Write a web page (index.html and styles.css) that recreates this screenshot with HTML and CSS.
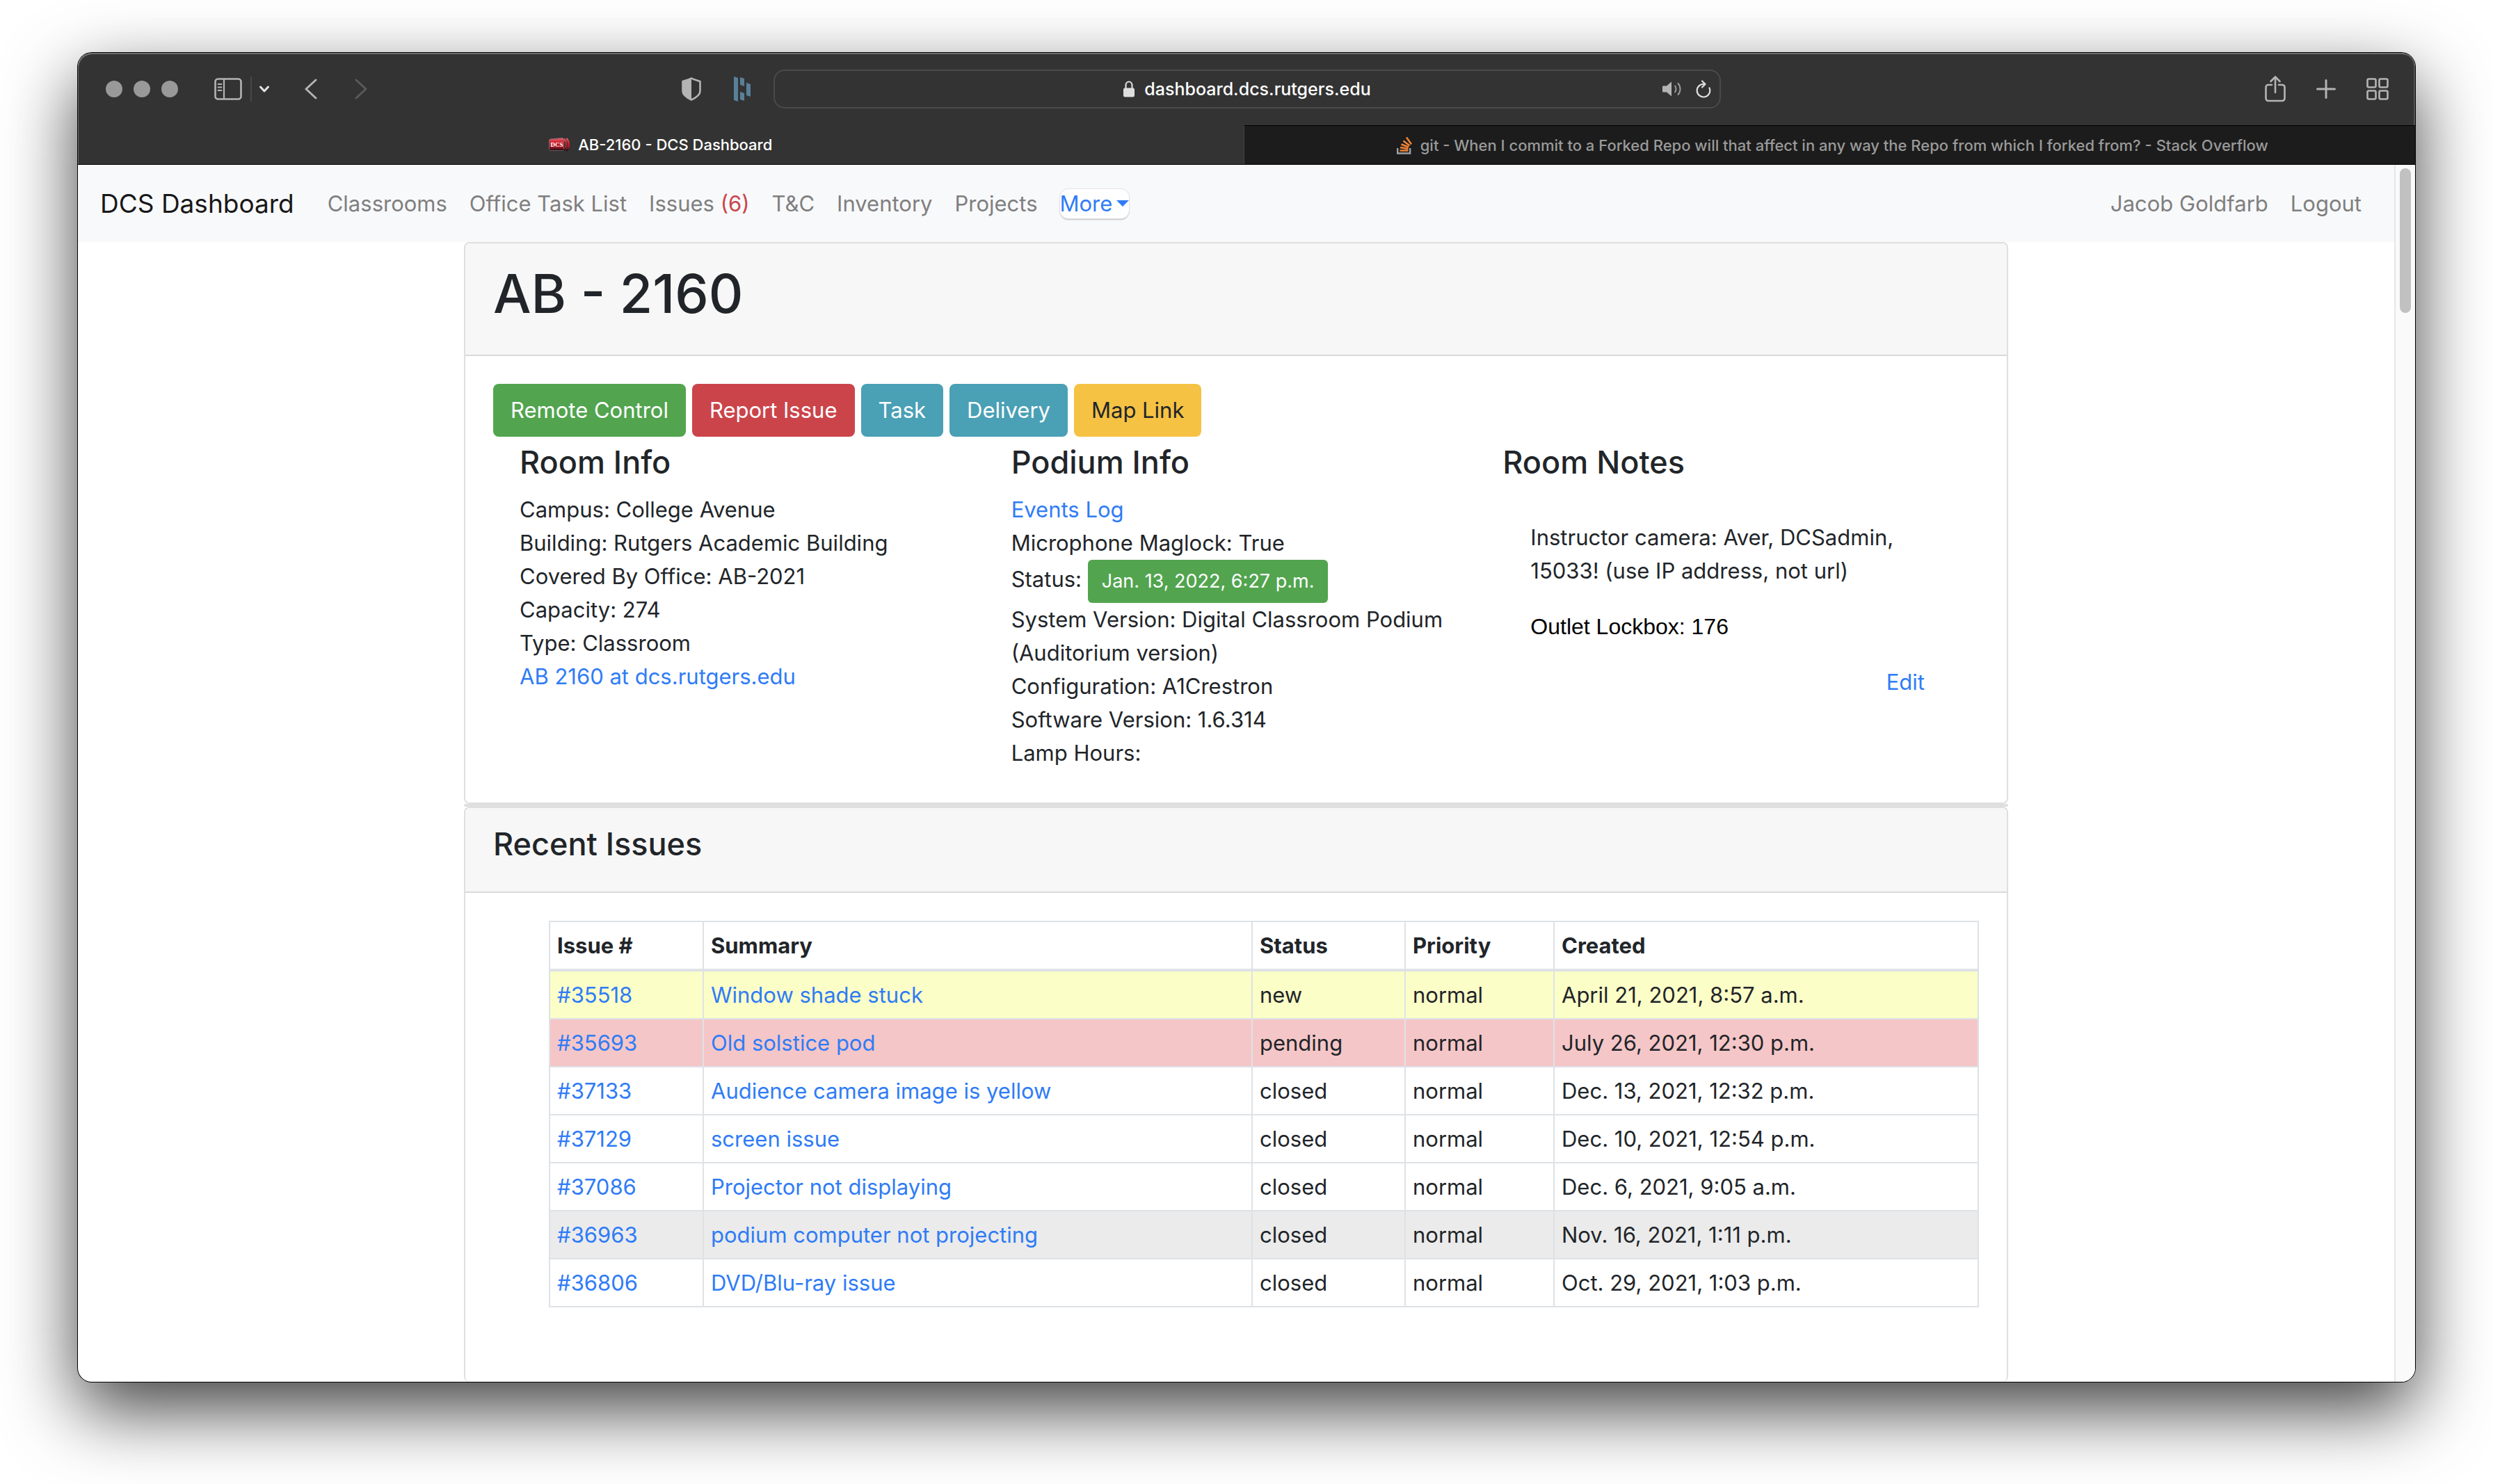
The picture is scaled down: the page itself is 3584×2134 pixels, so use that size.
FILE: index.html
```html
<!DOCTYPE html>
<html lang="en">
<head>
<meta charset="utf-8">
<meta name="viewport" content="width=device-width, initial-scale=1">
<title>AB-2160 - DCS Dashboard</title>
<link rel="stylesheet" href="styles.css">
</head>
<body>
<div class="window">
  <header class="chrome">
    <div class="toolbar">
      <div class="tools tools-left">
        <div class="lights"><span class="light"></span><span class="light"></span><span class="light"></span></div>
        <button class="tool sidebar-tool" type="button" aria-label="Show sidebar">
          <svg width="40" height="32" viewBox="0 0 40 32" fill="none" stroke="#b4b4b4"><rect x="1.5" y="1.5" width="37" height="29" rx="4" stroke-width="2.600"/><path d="M14 2v28" stroke-width="2.200"/><path d="M5.500 9h5M5.500 13.500h5M5.500 18h5" stroke-width="1.800" stroke-linecap="round"/></svg>
        </button>
        <span class="divider"></span>
        <button class="tool menu-tool" type="button" aria-label="Sidebar menu">
          <svg width="16" height="12" viewBox="0 0 16 12" fill="none" stroke="#e4e4e4" stroke-width="3" stroke-linecap="round" stroke-linejoin="round"><path d="M2.500 3L8 9l5.500-6"/></svg>
        </button>
        <button class="tool back-tool" type="button" aria-label="Back">
          <svg width="18" height="30" viewBox="0 0 18 30" fill="none" stroke="#b4b4b4" stroke-width="3" stroke-linecap="round" stroke-linejoin="round"><path d="M16 2L2 15l14 13"/></svg>
        </button>
        <button class="tool forward-tool" type="button" aria-label="Forward">
          <svg width="18" height="30" viewBox="0 0 18 30" fill="none" stroke="#5a5a5a" stroke-width="3" stroke-linecap="round" stroke-linejoin="round"><path d="M2 2l14 13L2 28"/></svg>
        </button>
        <div class="tools extensions">
          <button class="tool" type="button" aria-label="Privacy report">
            <svg width="28" height="34" viewBox="0 0 28 34"><path d="M14 1.500C10 4 6 4.500 1.500 6v14c0 5 5 9 12.500 12.500C21.500 29 26.500 25 26.500 20V6C22 4.500 18 4 14 1.500z" fill="none" stroke="#b4b4b4" stroke-width="2.600" stroke-linejoin="round"/><path d="M14 1.500C10 4 6 4.500 1.500 6v14c0 5 5 9 12.500 12.500z" fill="#b4b4b4"/></svg>
          </button>
          <button class="tool" type="button" aria-label="Password manager">
            <svg width="26" height="36" viewBox="0 0 26 36" fill="#58809a"><path d="M1 0l6 2v34l-6-2zM10 1l6 2v11l-6-2zM19 9l6 2v18l-6-2zM10 22l6 2v11l-6-2z"/></svg>
          </button>
        </div>
      </div>
      <div class="address">
        <span class="site">
          <svg width="16" height="24" viewBox="0 0 16 24"><path d="M3.500 11V6.500a4.500 5 0 0 1 9 0V11" fill="none" stroke="#dedede" stroke-width="2.200"/><rect x="0" y="10.500" width="16" height="13" rx="2.500" fill="#dedede"/></svg>
          <span>dashboard.dcs.rutgers.edu</span>
        </span>
        <span class="address-tools">
          <button class="tool" type="button" aria-label="Mute tab">
            <svg width="28" height="24" viewBox="0 0 28 24"><path d="M1 7.500h5l7-6v21l-7-6H1a1 1 0 0 1-1-1v-7a1 1 0 0 1 1-1z" fill="#b4b4b4"/><path d="M18 7.500c2 2.500 2 6.500 0 9M22.500 4c4 4.500 4 11.500 0 16" fill="none" stroke="#9a9a9a" stroke-width="2" stroke-linecap="round"/></svg>
          </button>
          <button class="tool" type="button" aria-label="Reload">
            <svg width="22" height="26" viewBox="0 0 22 26" fill="none" stroke="#dedede" stroke-width="2.200" stroke-linecap="round" stroke-linejoin="round"><path d="M19.500 11.500A9.300 9.300 0 1 1 12.500 6M9 1.500L13.500 6 9 10.500"/></svg>
          </button>
        </span>
      </div>
      <div class="tools tools-right">
        <button class="tool" type="button" aria-label="Share">
          <svg width="30" height="38" viewBox="0 0 30 38" fill="none" stroke="#b4b4b4" stroke-width="2.600" stroke-linecap="round" stroke-linejoin="round"><path d="M10 13H5a3.500 3.500 0 0 0-3.500 3.500v16A3.500 3.500 0 0 0 5 36h20a3.500 3.500 0 0 0 3.500-3.500v-16A3.500 3.500 0 0 0 25 13h-5M15 24V2M8.500 8L15 1.500 21.500 8"/></svg>
        </button>
        <button class="tool" type="button" aria-label="New tab">
          <svg width="28" height="28" viewBox="0 0 28 28" stroke="#b4b4b4" stroke-width="3" stroke-linecap="round"><path d="M14 1.500v25M1.500 14h25"/></svg>
        </button>
        <button class="tool" type="button" aria-label="Tab overview">
          <svg width="32" height="32" viewBox="0 0 32 32" fill="none" stroke="#b4b4b4" stroke-width="2.600"><rect x="1.500" y="1.500" width="12" height="12" rx="2"/><rect x="18.500" y="1.500" width="12" height="12" rx="2"/><rect x="1.500" y="18.500" width="12" height="12" rx="2"/><rect x="18.500" y="18.500" width="12" height="12" rx="2"/></svg>
        </button>
      </div>
    </div>
    <div class="tabs">
      <div class="tab tab-active">
        <svg width="30" height="20" viewBox="0 0 30 20">
          <defs><linearGradient id="badge" x1="0" y1="0" x2="0" y2="1"><stop offset="0" stop-color="#e2606a"/><stop offset=".35" stop-color="#cf2433"/><stop offset=".7" stop-color="#a81824"/><stop offset="1" stop-color="#150c0e"/></linearGradient></defs>
          <path d="M2.500 2L19 .5a2.500 2.500 0 0 1 2.500 2.500v13.500a2 2 0 0 1-2 2H2.500a2 2 0 0 1-2-2V4a2 2 0 0 1 2-2z" fill="url(#badge)" stroke="#8f8388" stroke-width=".6"/>
          <path d="M22 1.500c4 5 4 11 0 17M25.500 1c4.500 5.500 4.500 12.500 0 18" fill="none" stroke="url(#badge)" stroke-width="2.600"/>
          <text x="2.500" y="13" font-family="Liberation Serif, serif" font-size="9" font-weight="700" fill="#fff">DCS</text>
        </svg>
        <span>AB-2160 - DCS Dashboard</span>
      </div>
      <div class="tab tab-idle">
        <svg width="22" height="26" viewBox="0 0 22 26" fill="none"><path d="M1.200 17v7.500h18V17" stroke="#9da1a6" stroke-width="2.400"/><path d="M4.500 20.500h12M5 16l11.500 2M6.500 11.500l10.500 4M9.500 6.500l9 7M14 1.500l7 10" stroke="#ee8236" stroke-width="2.600"/></svg>
        <span>git - When I commit to a Forked Repo will that affect in any way the Repo from which I forked from? - Stack Overflow</span>
      </div>
    </div>
  </header>

  <div class="viewport">
    <div class="page">
      <nav class="navbar">
        <a class="brand" href="#">DCS Dashboard</a>
        <div class="nav-links">
          <a href="#">Classrooms</a>
          <a href="#">Office Task List</a>
          <a href="#">Issues <span class="count">(6)</span></a>
          <a href="#">T&amp;C</a>
          <a href="#">Inventory</a>
          <a href="#">Projects</a>
          <button class="more" type="button">More<span class="caret"></span></button>
        </div>
        <div class="nav-links nav-user">
          <a href="#">Jacob Goldfarb</a>
          <a href="#">Logout</a>
        </div>
      </nav>

      <main class="content">
        <section class="card">
          <div class="card-header"><h1>AB - 2160</h1></div>
          <div class="card-body">
            <div class="actions">
              <button class="btn btn-success" type="button">Remote Control</button>
              <button class="btn btn-danger" type="button">Report Issue</button>
              <button class="btn btn-info" type="button">Task</button>
              <button class="btn btn-info" type="button">Delivery</button>
              <button class="btn btn-warning" type="button">Map Link</button>
            </div>
            <div class="info-row">
              <div class="info-col">
                <h2>Room Info</h2>
                <div>Campus: College Avenue</div>
                <div>Building: Rutgers Academic Building</div>
                <div>Covered By Office: AB-2021</div>
                <div>Capacity: 274</div>
                <div>Type: Classroom</div>
                <div><a href="#">AB 2160 at dcs.rutgers.edu</a></div>
              </div>
              <div class="info-col">
                <h2>Podium Info</h2>
                <div><a href="#">Events Log</a></div>
                <div>Microphone Maglock: True</div>
                <div class="status-line">Status: <button class="btn-small btn-success" type="button">Jan. 13, 2022, 6:27 p.m.</button></div>
                <div>System Version: Digital Classroom Podium (Auditorium version)</div>
                <div>Configuration: A1Crestron</div>
                <div>Software Version: 1.6.314</div>
                <div>Lamp Hours:</div>
              </div>
              <div class="info-col">
                <h2>Room Notes</h2>
                <div class="notes">
                  <p>Instructor camera: Aver, DCSadmin, 15033! (use IP address, not url)</p>
                  <p class="lockbox">Outlet Lockbox: 176</p>
                  <a class="edit" href="#">Edit</a>
                </div>
              </div>
            </div>
          </div>
        </section>
        <div class="card-gap"></div>
        <section class="card card-last">
          <div class="card-header"><h2>Recent Issues</h2></div>
          <div class="card-body issues">
            <table>
              <colgroup><col class="c-id"><col class="c-summary"><col class="c-status"><col class="c-priority"><col></colgroup>
              <thead>
                <tr><th>Issue #</th><th>Summary</th><th>Status</th><th>Priority</th><th>Created</th></tr>
              </thead>
              <tbody>
                <tr class="row-new"><td><a href="#">#35518</a></td><td><a href="#">Window shade stuck</a></td><td>new</td><td>normal</td><td>April 21, 2021, 8:57 a.m.</td></tr>
                <tr class="row-pending"><td><a href="#">#35693</a></td><td><a href="#">Old solstice pod</a></td><td>pending</td><td>normal</td><td>July 26, 2021, 12:30 p.m.</td></tr>
                <tr><td><a href="#">#37133</a></td><td><a href="#">Audience camera image is yellow</a></td><td>closed</td><td>normal</td><td>Dec. 13, 2021, 12:32 p.m.</td></tr>
                <tr><td><a href="#">#37129</a></td><td><a href="#">screen issue</a></td><td>closed</td><td>normal</td><td>Dec. 10, 2021, 12:54 p.m.</td></tr>
                <tr><td><a href="#">#37086</a></td><td><a href="#">Projector not displaying</a></td><td>closed</td><td>normal</td><td>Dec. 6, 2021, 9:05 a.m.</td></tr>
                <tr class="row-hover"><td><a href="#">#36963</a></td><td><a href="#">podium computer not projecting</a></td><td>closed</td><td>normal</td><td>Nov. 16, 2021, 1:11 p.m.</td></tr>
                <tr><td><a href="#">#36806</a></td><td><a href="#">DVD/Blu-ray issue</a></td><td>closed</td><td>normal</td><td>Oct. 29, 2021, 1:03 p.m.</td></tr>
              </tbody>
            </table>
          </div>
        </section>
      </main>
    </div>
    <div class="scrollbar"><div class="thumb"></div></div>
  </div>
</div>
</body>
</html>
```
FILE: styles.css
```css
* { box-sizing: border-box; }

body {
  min-height: 100vh;
  margin: 0;
  padding: 76px 112px 140px;
  background: #fff;
  color: #212529;
  font-family: Inter, "Liberation Sans", sans-serif;
  font-size: 31px;
  line-height: 48px;
}

h1, h2, p { margin: 0; }
a { color: #2f7cf6; text-decoration: none; }
button { font: inherit; color: inherit; cursor: pointer; }
svg { display: block; flex: none; }

.window {
  border-radius: 20px;
  overflow: hidden;
  background: #fff;
  box-shadow: 0 0 0 1px #000, 0 40px 104px rgba(0, 0, 0, .75);
}

/* Browser chrome */
.chrome {
  background: #333;
  border-bottom: 1px solid #000;
  border-radius: 20px 20px 0 0;
  box-shadow: inset 1px 2px 0 #6e6e6e, inset -2px 0 0 #555;
}
.toolbar {
  display: flex;
  align-items: center;
  height: 104px;
  padding: 0 38px 0 40px;
}
.tool { border: 0; padding: 0; background: none; }
.tools { display: flex; align-items: center; }
.tools-left, .tools-right { flex: 1; }
.lights { display: flex; gap: 16px; margin-right: 52px; }
.light { width: 24px; height: 24px; border-radius: 50%; background: #999; }
.divider { width: 2px; height: 36px; margin: 0 10px 0 12px; background: #484848; }
.back-tool { margin-left: 50px; }
.forward-tool { margin-left: 54px; }
.extensions { gap: 46px; margin: 0 32px 0 auto; }
.address {
  display: grid;
  grid-template-columns: 1fr auto 1fr;
  align-items: center;
  width: 1362px;
  height: 56px;
  padding: 0 12px;
  border: 2px solid #4a4a4a;
  border-radius: 16px;
  color: #fff;
  font-size: 25px;
  font-weight: 500;
}
.site { display: flex; grid-column: 2; align-items: center; gap: 14px; }
.address-tools { display: flex; justify-content: flex-end; align-items: center; gap: 20px; }
.tools-right { justify-content: flex-end; gap: 44px; }

.tabs { display: flex; height: 56px; }
.tab {
  display: flex;
  flex: 1;
  align-items: center;
  justify-content: center;
  gap: 12px;
  color: #fff;
  font-size: 22px;
  font-weight: 500;
  white-space: nowrap;
}
.tab-idle {
  padding-left: 8px;
  background: #1c1c1c;
  border-top: 1px solid #000;
  border-left: 1px solid #444;
  color: #9a9a9a;
}

/* Page area */
.viewport { display: flex; }
.page { flex: 1; }
.scrollbar {
  width: 30px;
  padding: 5px 6px;
  border-left: 2px solid #e6e6e6;
  background: #fafafa;
}
.thumb { width: 16px; height: 208px; margin-left: auto; border-radius: 8px; background: #c1c1c1; }

.navbar {
  display: flex;
  align-items: center;
  gap: 48px;
  height: 111px;
  padding: 0 47px 0 32px;
  background: #f8f9fb;
}
.brand { color: #181818; font-size: 37px; }
.nav-links { display: flex; align-items: center; gap: 32px; }
.nav-links a { color: #7f7f7f; }
.nav-user { margin-left: auto; }
.nav-links .count { color: #cb444a; }
.more {
  display: flex;
  align-items: center;
  gap: 6px;
  height: 42px;
  padding: 0;
  border: 0;
  border-radius: 12px;
  background: #fff;
  box-shadow: 0 0 1px 1px #e4e4e6, 0 2px 2px #bbb;
  color: #2f7cf6;
}
.caret {
  border: 9px solid transparent;
  border-top-color: #2f7cf6;
  border-bottom: 0;
}

.content { width: 66.6667%; margin: 0 auto; }
.card {
  border: 2px solid #dfdfdf;
  border-radius: 8px;
  background: #fff;
}
.card-last { border-bottom: 0; }
.card-gap { height: 4px; background: #dfdfdf; border-radius: 2px; }
.card-header {
  padding: 24px 40px 40px;
  border-bottom: 2px solid #dadada;
  border-radius: 6px 6px 0 0;
  background: #f7f7f7;
}
h1 { font-size: 77px; font-weight: 500; line-height: 96px; }
h2 { font-size: 45px; font-weight: 500; line-height: 56px; }
.card-body { padding: 40px; }

.actions { display: flex; gap: 9px; }
.btn {
  height: 76px;
  padding: 0 25px;
  border: 0;
  border-radius: 8px;
  color: #fff;
}
.btn-small {
  height: 62px;
  padding: 0 20px;
  border: 0;
  border-radius: 6px;
  color: #fff;
  font-size: 27px;
  vertical-align: middle;
}
.btn-success { background: #52a44f; }
.btn-danger { background: #cb444a; }
.btn-info { background: #4aa0b5; }
.btn-warning { background: #f6c244; color: #212529; }

.info-row { display: grid; grid-template-columns: repeat(3, 1fr); padding: 9px 8px 7px; }
.info-col { padding: 0 30px; }
.info-col h2 { margin-bottom: 16px; }
.notes { display: flex; flex-direction: column; gap: 32px; padding: 40px; }
.lockbox { color: #000; font-family: "Liberation Sans", sans-serif; font-size: 32px; }
.edit { align-self: flex-end; }

.issues { padding: 40px 40px 107px 120px; }
table { width: 100%; border-collapse: collapse; table-layout: fixed; }
th, td { padding: 10px 10px 9px; border: 2px solid #dee2e6; text-align: left; }
th { font-weight: 700; border-bottom-width: 4px; }
.c-id { width: 221px; }
.c-summary { width: 789px; }
.c-status { width: 220px; }
.c-priority { width: 214px; }
.row-new { background: #fbfec7; }
.row-pending { background: #f5c6c7; }
.row-hover { background: #ebebeb; }
```
